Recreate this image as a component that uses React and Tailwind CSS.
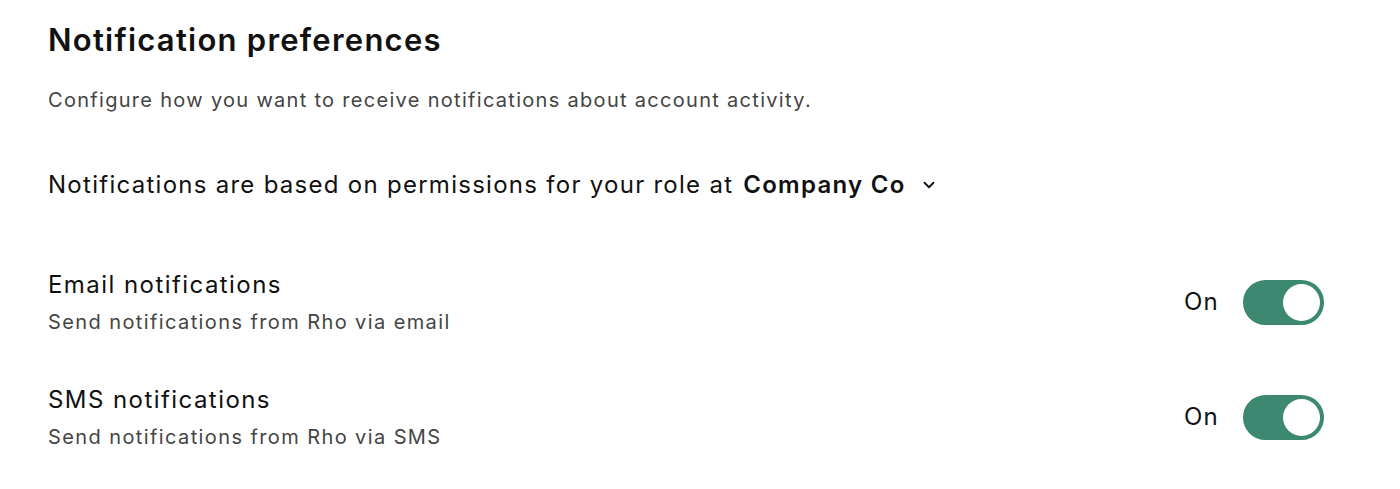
import { ChevronDown } from "lucide-react";

const channels = [
  { title: "Email notifications", desc: "Send notifications from Rho via email" },
  { title: "SMS notifications", desc: "Send notifications from Rho via SMS" },
];

function Toggle() {
  return (
    <div className="w-[81px] h-[45px] rounded-full bg-[#3d8870] border-[2px] border-[#3d8870] flex items-center justify-end p-[2px]">
      <div className="w-[37px] h-[37px] rounded-full bg-white" />
    </div>
  );
}

export default function App() {
  return (
    <div className="w-[1400px] h-[489px] bg-white font-['Inter',sans-serif] text-[#111] px-[48px] pt-[20px]">
      <h1 className="text-[31px] leading-[40px] font-semibold tracking-[0.04em]">Notification preferences</h1>
      <p className="mt-[26px] text-[20px] leading-[28px] text-[#444] tracking-[0.065em]">
        Configure how you want to receive notifications about account activity.
      </p>

      <div className="mt-[54px] flex items-center text-[24px] leading-[34px] tracking-[0.053em]">
        <span>Notifications are based on permissions for your role at</span>
        <span className="ml-[10px] font-semibold">Company Co</span>
        <ChevronDown className="ml-[14px] w-[18px] h-[18px]" strokeWidth={2.5} />
      </div>

      <div className="mt-[66px] flex flex-col gap-[47px] pr-[28px]">
        {channels.map((c) => (
          <div key={c.title} className="flex items-center justify-between">
            <div>
              <div className="text-[24px] leading-[34px] tracking-[0.06em]">{c.title}</div>
              <div className="mt-[6px] text-[20px] leading-[28px] text-[#444] tracking-[0.07em]">{c.desc}</div>
            </div>
            <div className="flex items-center gap-[24px]">
              <span className="text-[24px] tracking-[0.05em]">On</span>
              <Toggle />
            </div>
          </div>
        ))}
      </div>
    </div>
  );
}
